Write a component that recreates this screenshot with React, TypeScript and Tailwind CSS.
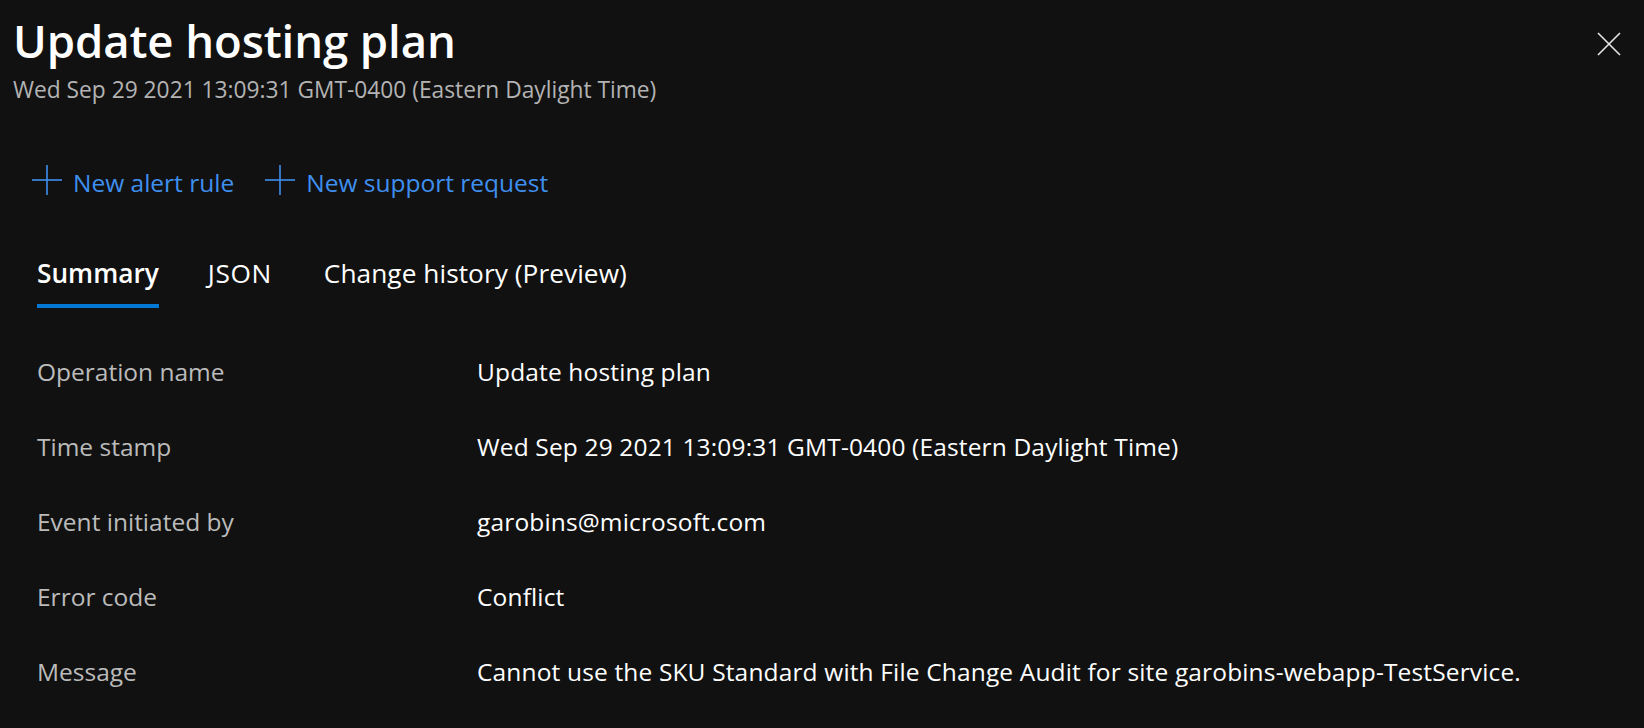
import React, { useState } from "react";

const rows = [
  { label: "Operation name", value: "Update hosting plan" },
  {
    label: "Time stamp",
    value: "Wed Sep 29 2021 13:09:31 GMT-0400 (Eastern Daylight Time)",
  },
  { label: "Event initiated by", value: "garobins@microsoft.com" },
  { label: "Error code", value: "Conflict" },
  {
    label: "Message",
    value:
      "Cannot use the SKU Standard with File Change Audit for site garobins-webapp-TestService.",
  },
];

const tabs = [
  { name: "Summary", space: "" },
  { name: "JSON", space: "tracking-[0.6px]" },
  { name: "Change history (Preview)", space: "ml-[3px] tracking-[0.05px]" },
];

const PlusIcon = () => (
  <svg width="30" height="30" viewBox="0 0 30 30" className="mb-[5px] shrink-0">
    <line x1="15" y1="0" x2="15" y2="30" stroke="#3f8fef" strokeWidth="1.6" />
    <line x1="0" y1="15" x2="30" y2="15" stroke="#3f8fef" strokeWidth="1.6" />
  </svg>
);

const App = () => {
  const [tab, setTab] = useState("Summary");

  return (
    <div className="min-h-screen w-full bg-[#111111] font-['Open_Sans','Noto_Sans',sans-serif] text-white">
      {/* header */}
      <div className="flex items-start justify-between pl-[13px] pr-[23px] pt-[12px]">
        <div>
          <h1 className="text-[45.5px] font-semibold leading-[56px] tracking-[-0.1px]">
            Update hosting plan
          </h1>
          <div className="mt-[7px] text-[22.75px] leading-[30px] text-[#b3b3b3]">
            Wed Sep 29 2021 13:09:31 GMT-0400 (Eastern Daylight Time)
          </div>
        </div>
        <button className="mt-[20px] p-0" aria-label="Close">
          <svg width="24" height="24" viewBox="0 0 24 24">
            <path d="M1 1 L23 23 M23 1 L1 23" stroke="#e6e6e6" strokeWidth="1.6" />
          </svg>
        </button>
      </div>

      {/* command bar */}
      <div className="mt-[60px] flex items-center gap-[31px] pl-[32px] text-[24.5px] leading-[32px] text-[#3f8fef]">
        <button className="flex items-center gap-[11px]">
          <PlusIcon />
          <span>New alert rule</span>
        </button>
        <button className="flex items-center gap-[11px]">
          <PlusIcon />
          <span>New support request</span>
        </button>
      </div>

      {/* tabs */}
      <div className="mt-[56px] flex gap-[49px] pl-[37px]">
        {tabs.map((t) => (
          <button
            key={t.name}
            onClick={() => setTab(t.name)}
            className={
              t.name === tab
                ? "border-b-4 border-[#0078d4] pb-[14px] text-[26.25px] font-semibold leading-[34px] text-white"
                : `border-b-4 border-transparent pb-[14px] text-[26.25px] leading-[34px] text-white ${t.space}`
            }
          >
            {t.name}
          </button>
        ))}
      </div>

      {/* details */}
      <div className="mt-[48px] grid grid-cols-[440px_1fr] gap-y-[43px] pl-[37px] text-[24.5px] leading-[32px]">
        {rows.map((r) => (
          <React.Fragment key={r.label}>
            <div className="text-[#bbbbbb]">{r.label}</div>
            <div className="tracking-[0.15px] text-white">{r.value}</div>
          </React.Fragment>
        ))}
      </div>
    </div>
  );
};

export default App;
